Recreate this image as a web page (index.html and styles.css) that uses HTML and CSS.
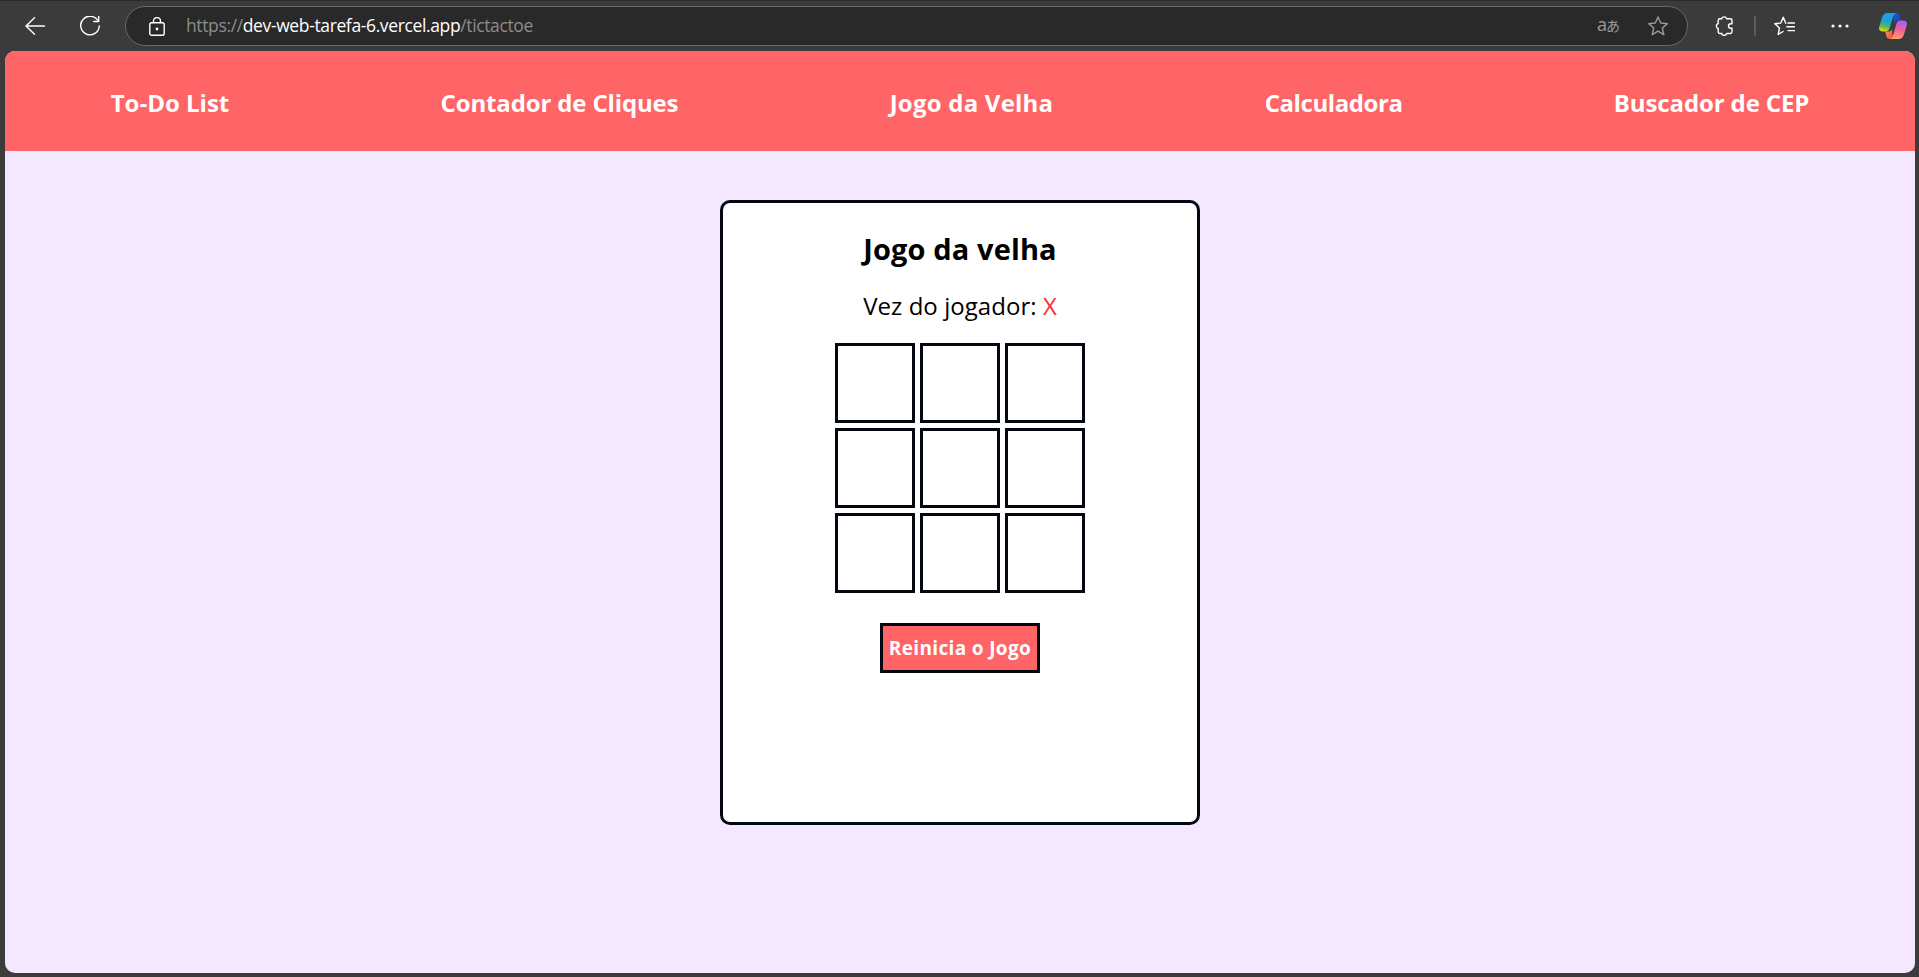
FILE: index.html
```html
<!DOCTYPE html>
<html lang="pt-BR">
<head>
<meta charset="utf-8">
<title>Jogo da Velha</title>
<link rel="stylesheet" href="styles.css">
</head>
<body>
<div class="toolbar">
  <svg class="icon back" viewBox="0 0 20 18"><path d="M19.500 9H1M9.500 .7 1 9l8.500 8.300"/></svg>
  <svg class="icon reload" viewBox="0 0 20 20"><path d="M18.300 5.300A9.300 9.300 0 1 0 19.300 10M18.700 .5v5h-5"/></svg>
  <div class="address">
    <svg class="icon lock" viewBox="0 0 16 19"><rect x=".8" y="5.800" width="14.400" height="12.400" rx="1.800"/><path d="M4.500 5.500V4a3.500 3.500 0 0 1 7 0v1.500"/><circle class="solid" cx="8" cy="12" r="1.400"/></svg>
    <p class="url">https://<span class="host">dev-web-tarefa-6.vercel.app</span>/tictactoe</p>
    <span class="translate">a<small>あ</small></span>
    <svg class="icon star" viewBox="0 0 20 20"><path d="m10 1 2.700 6 6.600.6-5 4.400 1.500 6.700-5.800-3.500-5.800 3.500L5.700 12l-5-4.400L7.300 7z"/></svg>
  </div>
  <svg class="icon puzzle" viewBox="0 0 18 20"><path d="M4.900 2.800h1.800a2.600 2.600 0 0 1 5 0h3.600q1.700 0 1.700 1.700v3.200h-1.200a2.300 2.300 0 0 0 0 4.600H17v3.500q0 1.700-1.700 1.700h-3.600a2.600 2.600 0 0 1-5 0H4.900q-1.700 0-1.700-1.700v-3.300a2.600 2.600 0 0 1 0-5V4.500q0-1.700 1.700-1.700z"/></svg>
  <i class="divider"></i>
  <svg class="icon favorites" viewBox="0 0 21 20"><path d="M14 7h6.500M12.800 10.800h7.700M14 14.600h6.500M11.800 7.200 9.300 1.200 6.800 7.100.8 7.700l4.700 4.200-1.300 6.600 4.900-3"/></svg>
  <svg class="icon more" viewBox="0 0 18 4"><circle class="solid" cx="2" cy="2" r="1.600"/><circle class="solid" cx="9" cy="2" r="1.600"/><circle class="solid" cx="16" cy="2" r="1.600"/></svg>
  <svg class="copilot" viewBox="0 0 28 26">
    <defs>
      <linearGradient id="cool" x1=".5" y1="0" x2=".3" y2="1"><stop offset="0" stop-color="#1ba0f2"/><stop offset=".45" stop-color="#1f9fd0"/><stop offset=".75" stop-color="#5fbb55"/><stop offset="1" stop-color="#f4d90c"/></linearGradient>
      <linearGradient id="warm" x1=".6" y1="0" x2=".4" y2="1"><stop offset="0" stop-color="#a65cf3"/><stop offset=".5" stop-color="#f0609a"/><stop offset="1" stop-color="#ffa05e"/></linearGradient>
      <linearGradient id="navy" x1="0" y1="0" x2="1" y2="1"><stop offset="0" stop-color="#1263dc"/><stop offset="1" stop-color="#1b3fb5"/></linearGradient>
      <linearGradient id="fire" x1="0" y1="0" x2="1" y2="1"><stop offset="0" stop-color="#ff9b42"/><stop offset="1" stop-color="#f04450"/></linearGradient>
    </defs>
    <path fill="url(#navy)" d="M14 0h3q3 0 3.700 3l1 4.500h-3.700q-2.200 0-3 2.500z"/>
    <path fill="url(#fire)" d="M14 26h-3q-3 0-3.700-3L6.300 18.500H10q2.200 0 3-2.500z"/>
    <path fill="url(#cool)" d="M8.500 0H17q-2.200.6-3 3.500l-3.500 12q-.9 3-4 3H4q-5 0-3.700-5L3 4.500Q4.500 0 8.500 0z"/>
    <path fill="url(#warm)" d="M19.500 26H11q2.200-.6 3-3.500l3.500-12q.9-3 4-3H24q5 0 3.700 5l-2.700 9Q23.500 26 19.500 26z"/>
  </svg>
</div>
<div class="page">
  <nav class="menu">
    <a class="todo">To-Do List</a>
    <a class="counter">Contador de Cliques</a>
    <a class="game">Jogo da Velha</a>
    <a class="calculator">Calculadora</a>
    <a class="postal">Buscador de CEP</a>
  </nav>
  <main class="card">
    <h1 class="title">Jogo da velha</h1>
    <p class="turn">Vez do jogador: <span class="player">X</span></p>
    <div class="board">
      <div class="cell"></div><div class="cell"></div><div class="cell"></div>
      <div class="cell"></div><div class="cell"></div><div class="cell"></div>
      <div class="cell"></div><div class="cell"></div><div class="cell"></div>
    </div>
    <button class="reset">Reinicia o Jogo</button>
  </main>
</div>
</body>
</html>
```
FILE: styles.css
```css
* { box-sizing: border-box; margin: 0; }
body {
  height: 977px;
  padding: 0 4px 4px 5px;
  overflow: hidden;
  display: flex;
  flex-direction: column;
  background: #3b3b3b;
  border-top: 1px solid #2b2b2b;
  font-family: "Segoe UI", "Open Sans", "Noto Sans", sans-serif;
}
.toolbar { height: 50px; flex: none; display: flex; align-items: center; padding: 0 2px 0 20px; }
.icon { flex: none; fill: none; stroke: #fff; stroke-width: 1.4; stroke-linejoin: round; stroke-linecap: round; }
.icon .solid { fill: #fff; stroke: none; }
.back { width: 20px; height: 18px; }
.reload { width: 20px; height: 20px; margin-left: 35px; }
.address {
  width: 1563px;
  height: 40px;
  flex: none;
  margin-left: 25px;
  padding: 0 19px 0 23px;
  display: flex;
  align-items: center;
  background: #292929;
  border: 1px solid #6a6a6a;
  border-radius: 20px;
}
.lock { width: 16px; height: 19px; }
.url { margin-left: 21px; padding-bottom: 2px; font-size: 17.5px; letter-spacing: -.37px; color: #8d8d8d; white-space: nowrap; }
.host { color: #fff; }
.translate { margin-left: auto; padding-bottom: 2px; display: flex; align-items: baseline; color: #9a9a9a; font-size: 18px; line-height: 20px; font-family: "Open Sans", "Noto Sans CJK JP", sans-serif; }
.translate small { margin-left: -1px; font-size: 14px; }
.icon.star { width: 20px; height: 20px; margin-left: 28px; stroke: #9a9a9a; }
.puzzle { width: 18px; height: 20px; margin-left: 27px; }
.divider { width: 2px; height: 20px; margin-left: 21px; background: #5c5c5c; }
.favorites { width: 21px; height: 20px; margin-left: 18px; }
.more { width: 18px; height: 4px; margin-left: 36px; }
.copilot { width: 28px; height: 26px; margin-left: 30px; }
.page {
  flex: 1;
  display: flex;
  flex-direction: column;
  align-items: center;
  background: #f3e8ff;
  border-radius: 10px;
  overflow: hidden;
}
.menu {
  width: 100%;
  height: 100px;
  flex: none;
  display: flex;
  justify-content: space-around;
  align-items: center;
  padding-top: 2px;
  background: #ff6467;
  color: #fff;
  font-size: 24px;
  font-weight: 700;
  white-space: nowrap;
}
.counter { letter-spacing: -.15px; }
.game { letter-spacing: .22px; }
.calculator { letter-spacing: -.42px; }
.postal { letter-spacing: -.12px; }
.card {
  width: 480px;
  height: 625px;
  margin-top: 49px;
  display: flex;
  flex-direction: column;
  align-items: center;
  background: #fff;
  border: 3px solid #030712;
  border-radius: 10px;
  color: #000;
  white-space: nowrap;
}
.title { margin-top: 26px; font-size: 29px; line-height: 40px; letter-spacing: .12px; }
.turn { margin-top: 21px; font-size: 24px; line-height: 32px; letter-spacing: .05px; }
.player { color: #fb2c36; }
.board { margin-top: 21px; display: grid; grid-template-columns: repeat(3, 80px); grid-auto-rows: 80px; gap: 5px; }
.cell { border: 3px solid #030712; }
.reset {
  width: 160px;
  height: 50px;
  margin-top: 30px;
  padding: 0;
  border: 3px solid #030712;
  background: #ff6467;
  color: #fff;
  font: 700 19px "Segoe UI", "Open Sans", sans-serif;
  letter-spacing: .35px;
}
```
